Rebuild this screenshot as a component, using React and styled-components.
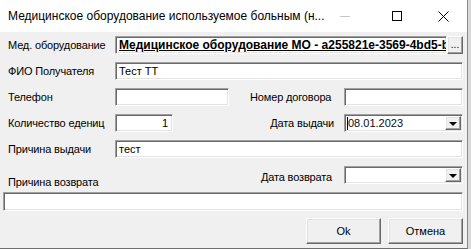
import styled, { createGlobalStyle } from "styled-components";

const GlobalStyle = createGlobalStyle`
  html, body {
    margin: 0;
    padding: 0;
    background: #d9d9d9;
  }
  body {
    font-family: "Liberation Sans", Arial, sans-serif;
    font-size: 11px;
    color: #000;
  }
`;

const App = () => {
  return (
    <>
      <GlobalStyle />
      <Window>
        <TitleBar>
          <Title>Медицинское оборудование используемое больным (н...</Title>
          <Controls>
            <CtrlBtn>
              <MinGlyph />
            </CtrlBtn>
            <CtrlBtn>
              <MaxGlyph />
            </CtrlBtn>
            <CtrlBtn>
              <svg width="11" height="11" viewBox="0 0 11 11">
                <path d="M0.5 0.5 L10.5 10.5 M10.5 0.5 L0.5 10.5" stroke="#000" strokeWidth="1" />
              </svg>
            </CtrlBtn>
          </Controls>
        </TitleBar>

        <Body>
          <Row>
            <Label>Мед. оборудование</Label>
            <TextBox $flex>
              <BoldLink>Медицинское оборудование МО - a255821e-3569-4bd5-b1c7</BoldLink>
            </TextBox>
            <SmallButton>...</SmallButton>
          </Row>

          <Row>
            <Label>ФИО Получателя</Label>
            <TextBox $flex>Тест ТТ</TextBox>
          </Row>

          <Row>
            <Label>Телефон</Label>
            <TextBox $w={114} />
            <SubLabel $pad="0 0 0 21px">Номер договора</SubLabel>
            <TextBox $w={119} />
          </Row>

          <Row>
            <Label>Количество едениц</Label>
            <TextBox $w={58} $right>1</TextBox>
            <SubLabel $right $pad="0 10px 0 0">Дата выдачи</SubLabel>
            <DateBox>
              <DateText>
                <Caret />
                08.01.2023
              </DateText>
              <DropButton>
                <Arrow />
              </DropButton>
            </DateBox>
          </Row>

          <Row>
            <Label>Причина выдачи</Label>
            <TextBox $flex>тест</TextBox>
          </Row>

          <Row $end>
            <Label $low>Причина возврата</Label>
            <SubLabel $right $pad="0 12px 0 0">Дата возврата</SubLabel>
            <DateBox>
              <DateText />
              <DropButton>
                <Arrow />
              </DropButton>
            </DateBox>
          </Row>

          <TextArea />

          <ButtonBar>
            <Button>Ok</Button>
            <Button>Отмена</Button>
          </ButtonBar>
        </Body>
      </Window>
    </>
  );
};

const Window = styled.div`
  width: 468px;
  height: 249px;
  display: flex;
  flex-direction: column;
  background: #f0f0f0;
  border-right: 1px solid #8c8c8c;
  border-bottom: 1px solid #6f6f6f;
  box-sizing: border-box;
`;

const TitleBar = styled.div`
  height: 32px;
  flex: none;
  display: flex;
  align-items: center;
  background: #fff;
`;

const Title = styled.div`
  flex: 1;
  padding-left: 8px;
  font-family: "Liberation Sans", Arial, sans-serif;
  font-size: 12px;
  color: #000;
  white-space: nowrap;
`;

const Controls = styled.div`
  display: flex;
  height: 32px;
  margin-right: 1px;
`;

const CtrlBtn = styled.div`
  width: 46px;
  height: 32px;
  display: flex;
  align-items: center;
  justify-content: center;
`;

const MinGlyph = styled.div`
  width: 10px;
  height: 1px;
  background: #c6c6c6;
  margin-right: 12px;
`;

const MaxGlyph = styled.div`
  width: 10px;
  height: 10px;
  border: 1px solid #000;
  box-sizing: border-box;
`;

const Body = styled.div`
  flex: 1;
  display: flex;
  flex-direction: column;
  gap: 8px;
  padding: 4px 4px 4px 3px;
`;

const Row = styled.div`
  display: flex;
  align-items: ${({ $end }) => ($end ? "flex-end" : "center")};
  height: 18px;
  padding-left: 5px;
`;

const Label = styled.div`
  width: 107px;
  flex: none;
  white-space: nowrap;
  line-height: 13px;
  letter-spacing: -0.15px;
  margin-bottom: ${({ $low }) => ($low ? "-5px" : "0")};
`;

const SubLabel = styled.div`
  flex: 1;
  white-space: nowrap;
  text-align: ${({ $right }) => ($right ? "right" : "left")};
  padding: ${({ $pad }) => $pad};
  line-height: 13px;
  letter-spacing: -0.15px;
`;

const sunken = `
  border-style: solid;
  border-width: 1px;
  border-color: #a0a0a0 #ffffff #ffffff #a0a0a0;
  box-shadow: inset 1px 1px 0 #696969, inset -1px -1px 0 #e3e3e3;
  box-sizing: border-box;
  background: #fff;
`;

const TextBox = styled.div`
  ${sunken}
  height: 18px;
  ${({ $flex, $w }) => ($flex ? "flex: 1; min-width: 0;" : `width: ${$w}px; flex: none;`)}
  padding: 0 ${({ $right }) => ($right ? "4px" : "0")} 0 3px;
  line-height: 16px;
  white-space: nowrap;
  overflow: hidden;
  text-align: ${({ $right }) => ($right ? "right" : "left")};
`;

const BoldLink = styled.span`
  display: block;
  overflow: hidden;
  font-weight: bold;
  font-size: 12px;
  text-decoration: underline;
`;

const raised = `
  background: #f0f0f0;
  border-style: solid;
  border-width: 1px;
  border-color: #ffffff #696969 #696969 #ffffff;
  box-shadow: inset -1px -1px 0 #a0a0a0, inset 1px 1px 0 #e3e3e3;
  box-sizing: border-box;
`;

const SmallButton = styled.div`
  ${raised}
  width: 16px;
  height: 18px;
  flex: none;
  text-align: center;
  line-height: 16px;
  font-size: 10px;
  overflow: hidden;
`;

const DateBox = styled.div`
  ${sunken}
  width: 119px;
  height: 18px;
  flex: none;
  display: flex;
  align-items: stretch;
  padding: 1px;
`;

const DateText = styled.div`
  flex: 1;
  display: flex;
  align-items: center;
  padding-left: 1px;
  line-height: 14px;
  color: #0a0a2a;
`;

const Caret = styled.span`
  width: 1px;
  height: 13px;
  background: #000;
`;

const DropButton = styled.div`
  ${raised}
  width: 16px;
  display: flex;
  align-items: center;
  justify-content: center;
`;

const Arrow = styled.div`
  width: 0;
  height: 0;
  border-left: 4px solid transparent;
  border-right: 4px solid transparent;
  border-top: 4px solid #000;
  margin-top: 1px;
`;

const TextArea = styled.div`
  ${sunken}
  height: 19px;
  flex: none;
`;

const ButtonBar = styled.div`
  display: flex;
  justify-content: flex-end;
  gap: 7px;
  margin-top: -1px;
`;

const Button = styled.div`
  ${raised}
  width: 75px;
  height: 26px;
  display: flex;
  align-items: center;
  justify-content: center;
  font-size: 11px;
`;

export default App;
